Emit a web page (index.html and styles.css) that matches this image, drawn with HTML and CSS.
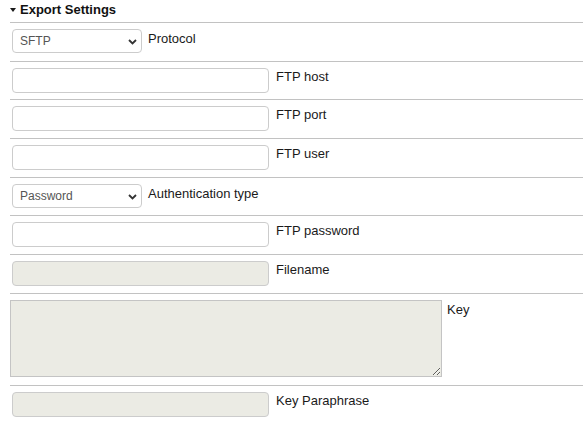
FILE: index.html
```html
<!DOCTYPE html>
<html>
<head>
<meta charset="utf-8">
<link rel="stylesheet" href="styles.css">
</head>
<body>
<div class="panel">
  <div class="legend"><span class="caret"></span><span class="legend-text">Export Settings</span></div>

  <div class="row">
    <span class="select-wrap">
      <select class="select"><option>SFTP</option></select>
      <svg class="chev" width="9" height="6" viewBox="0 0 9 6"><path d="M1 1 L4.5 4.5 L8 1" fill="none" stroke="#333" stroke-width="1.8"/></svg>
    </span>
    <label class="label label-select">Protocol</label>
  </div>

  <div class="row">
    <input class="text" type="text">
    <label class="label">FTP host</label>
  </div>

  <div class="row">
    <input class="text" type="text">
    <label class="label">FTP port</label>
  </div>

  <div class="row">
    <input class="text" type="text">
    <label class="label">FTP user</label>
  </div>

  <div class="row">
    <span class="select-wrap">
      <select class="select"><option>Password</option></select>
      <svg class="chev" width="9" height="6" viewBox="0 0 9 6"><path d="M1 1 L4.5 4.5 L8 1" fill="none" stroke="#333" stroke-width="1.8"/></svg>
    </span>
    <label class="label label-select">Authentication type</label>
  </div>

  <div class="row">
    <input class="text" type="password">
    <label class="label">FTP password</label>
  </div>

  <div class="row">
    <input class="text" type="text" disabled>
    <label class="label">Filename</label>
  </div>

  <div class="row row-tall">
    <textarea class="area" disabled></textarea>
    <label class="label label-area">Key</label>
  </div>

  <div class="row">
    <input class="text" type="text" disabled>
    <label class="label">Key Paraphrase</label>
  </div>
</div>
</body>
</html>
```

FILE: styles.css
```css
html, body {
  margin: 0;
  padding: 0;
  background: #fff;
}
body {
  font-family: "Liberation Sans", Arial, sans-serif;
  font-size: 13px;
  color: #1a1a1a;
}
.panel {
  margin-left: 10px;
}
.legend {
  height: 22px;
  box-sizing: border-box;
  padding-top: 2px;
  display: flex;
  align-items: flex-start;
  font-weight: bold;
  line-height: 15px;
}
.caret {
  width: 0;
  height: 0;
  margin: 6px 4px 0 0;
  border-left: 3.5px solid transparent;
  border-right: 3.5px solid transparent;
  border-top: 4px solid #1a1a1a;
}
.legend-text {
  color: #111;
}
.row {
  display: flex;
  align-items: flex-start;
  box-sizing: border-box;
  height: 38.7px;
  border-top: 1px solid #c2c2c2;
  padding: 5px 0 0 2px;
}
.row-tall {
  height: 92.3px;
}
.label {
  margin-left: 7px;
  margin-top: 2px;
  line-height: 15px;
  color: #1a1a1a;
}
.label-select {
  margin-left: 6px;
  margin-top: 3px;
}
.label-area {
  margin-left: 5px;
  margin-top: 3px;
}
.text {
  box-sizing: border-box;
  width: 257px;
  height: 25px;
  margin: 1px 0 0 0;
  padding: 0 8px;
  border: 1px solid #cccccc;
  border-radius: 4px;
  background: #fff;
  font: 12px "Liberation Sans", Arial, sans-serif;
  outline: none;
}
.text:disabled {
  background: #ebebe4;
}
.select-wrap {
  position: relative;
  display: block;
  margin-top: 1px;
}
.select {
  display: block;
  box-sizing: border-box;
  width: 130px;
  height: 24px;
  margin: 0;
  padding: 0 20px 0 7px;
  border: 1px solid #cccccc;
  border-radius: 4px;
  background: #fff;
  color: #555;
  font: 12px "Liberation Sans", Arial, sans-serif;
  -webkit-appearance: none;
  appearance: none;
  outline: none;
}
.chev {
  position: absolute;
  left: 116px;
  top: 10px;
  pointer-events: none;
}
.area {
  display: block;
  box-sizing: border-box;
  width: 432px;
  height: 77px;
  margin: 1px 0 0 -2px;
  padding: 2px;
  border: 1px solid #c4c4c4;
  border-radius: 0;
  background: #ebebe4;
  font: 13px "Liberation Sans", Arial, sans-serif;
}
```
